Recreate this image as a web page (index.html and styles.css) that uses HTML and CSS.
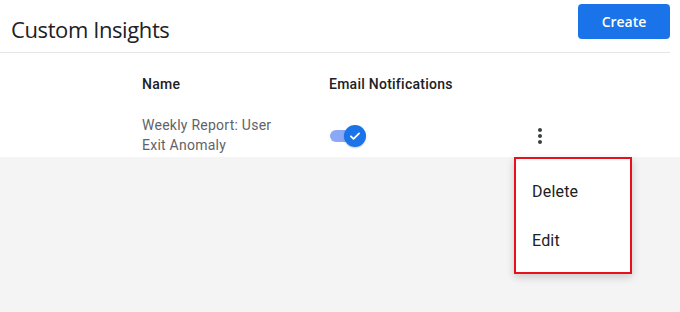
FILE: index.html
```html
<!DOCTYPE html>
<html lang="en">
<head>
  <meta charset="UTF-8">
  <title>Custom Insights</title>
  <link rel="stylesheet" href="styles.css">
</head>
<body>
  <div class="page">
    <!-- Header -->
    <div class="header">
      <h1>Custom Insights</h1>
      <button class="create-btn">Create</button>
    </div>

    <!-- Insights table -->
    <div class="insights">
      <div class="row head">
        <div class="col-name">Name</div>
        <div class="col-email">Email Notifications</div>
        <div class="col-menu"></div>
      </div>
      <div class="row item">
        <div class="col-name">Weekly Report: User<br>Exit Anomaly</div>
        <div class="col-email">
          <span class="toggle">
            <span class="track"></span>
            <span class="thumb">
              <svg width="14" height="14" viewBox="0 0 24 24"><path d="M5 12.5l4.5 4.5L19 7.5" fill="none" stroke="#fff" stroke-width="3" stroke-linecap="round" stroke-linejoin="round"/></svg>
            </span>
          </span>
        </div>
        <div class="col-menu">
          <svg width="24" height="24" viewBox="0 0 24 24"><path fill="#3c4043" d="M12 8c1.1 0 2-.9 2-2s-.9-2-2-2-2 .9-2 2 .9 2 2 2zm0 2c-1.1 0-2 .9-2 2s.9 2 2 2 2-.9 2-2-.9-2-2-2zm0 6c-1.1 0-2 .9-2 2s.9 2 2 2 2-.9 2-2-.9-2-2-2z"/></svg>
        </div>
      </div>
    </div>
  </div>

  <!-- Row actions menu -->
  <div class="menu">
    <div class="menu-item">Delete</div>
    <div class="menu-item">Edit</div>
  </div>
</body>
</html>
```

FILE: styles.css
```css
body {
  margin: 0;
  padding: 0;
  background-color: #f4f4f4;
  font-family: Roboto, "Liberation Sans", sans-serif;
  height: 312px;
  overflow: hidden;
  position: relative;
}

.page {
  background: #ffffff;
  height: 157px;
}

.header {
  display: flex;
  justify-content: space-between;
  align-items: center;
  height: 52px;
  margin-right: 10px;
  border-bottom: 1px solid #e6e6e6;
}

.header h1 {
  margin: 6px 0 0 11px;
  font-family: "Open Sans", sans-serif;
  font-weight: 400;
  font-size: 22px;
  color: #202124;
  letter-spacing: -0.4px;
}

.create-btn {
  margin-top: -10px;
  width: 92px;
  height: 35px;
  border: none;
  border-radius: 4px;
  background-color: #1a73e8;
  color: #ffffff;
  font-family: "Open Sans", sans-serif;
  font-size: 14px;
  font-weight: 600;
  cursor: pointer;
}

.row {
  display: flex;
  padding-left: 142px;
  letter-spacing: 0.25px;
}

.col-name {
  width: 187px;
}

.col-email {
  width: 199px;
}

.col-menu {
  width: 24px;
}

.row.head {
  height: 60px;
  padding-top: 1px;
  box-sizing: border-box;
  align-items: center;
  font-size: 14px;
  font-weight: 500;
  color: #202124;
}

.row.item {
  align-items: center;
  font-size: 14px;
  line-height: 20px;
  color: #5f6368;
  height: 44px;
}

.toggle {
  position: relative;
  display: inline-block;
  width: 36px;
  height: 22px;
  margin-left: 1px;
  margin-top: 2px;
  vertical-align: middle;
}

.track {
  position: absolute;
  left: 0;
  top: 5px;
  width: 30px;
  height: 12px;
  border-radius: 6px;
  background-color: #8aa8f5;
}

.thumb {
  position: absolute;
  left: 14px;
  top: 0;
  width: 22px;
  height: 22px;
  border-radius: 50%;
  background-color: #1a73e8;
  display: flex;
  align-items: center;
  justify-content: center;
  box-shadow: 0 1px 2px rgba(0, 0, 0, 0.2);
}

.col-menu svg {
  display: block;
  margin-top: 2px;
}

.menu {
  position: absolute;
  left: 514px;
  top: 157px;
  width: 118px;
  height: 117px;
  background: #ffffff;
  border: 2px solid #e8101a;
  box-shadow: 0 3px 8px rgba(0, 0, 0, 0.18);
  padding-top: 8px;
  box-sizing: border-box;
}

.menu-item {
  height: 49px;
  line-height: 49px;
  padding-left: 16px;
  font-size: 16px;
  color: #202124;
  letter-spacing: 0.2px;
}
```
